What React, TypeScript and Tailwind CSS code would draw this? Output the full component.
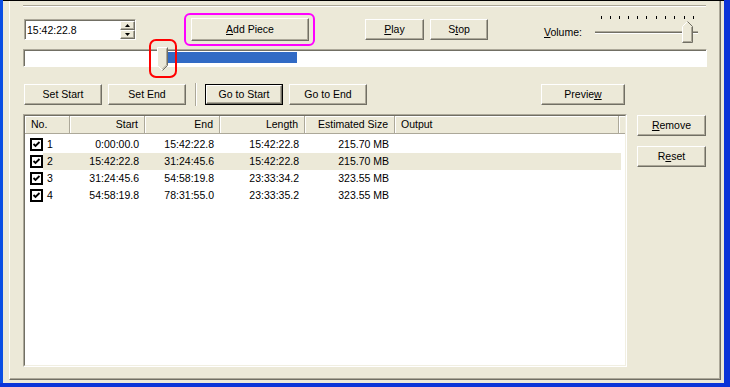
import type { ReactNode } from "react";
import clsx from "clsx";

const pieces = [
  { no: 1, start: "0:00:00.0", end: "15:42:22.8", length: "15:42:22.8", size: "215.70 MB" },
  { no: 2, start: "15:42:22.8", end: "31:24:45.6", length: "15:42:22.8", size: "215.70 MB" },
  { no: 3, start: "31:24:45.6", end: "54:58:19.8", length: "23:33:34.2", size: "323.55 MB" },
  { no: 4, start: "54:58:19.8", end: "78:31:55.0", length: "23:33:35.2", size: "323.55 MB" },
];

const ticks = [6, 15, 24, 33, 42, 51, 61, 70, 79, 89, 98];

function U({ children }: { children: ReactNode }) {
  return <span className="underline">{children}</span>;
}

function Btn({ children, className }: { children?: ReactNode; className?: string }) {
  return (
    <div
      className={clsx(
        "flex shrink-0 items-center justify-center border border-t-white border-l-white border-r-[#716f64] border-b-[#716f64] bg-[#ece9d8] shadow-[inset_-1px_-1px_0_#aca899]",
        className
      )}
    >
      {children}
    </div>
  );
}

function Check() {
  return (
    <div className="flex h-[13px] w-[13px] items-center justify-center border-2 border-black bg-white">
      <svg width="9" height="9" viewBox="0 0 9 9">
        <polyline points="1.5,4 3.5,6 7.5,2" fill="none" stroke="black" strokeWidth="1.8" />
      </svg>
    </div>
  );
}

function Arrow({ up }: { up?: boolean }) {
  return (
    <svg width="5" height="3" viewBox="0 0 5 3">
      <polygon points={up ? "2.5,0 5,3 0,3" : "0,0 5,0 2.5,3"} fill="black" />
    </svg>
  );
}

export default function App() {
  return (
    <div className="flex h-[387px] w-[730px] flex-col overflow-hidden bg-[#ece9d8] font-['Liberation_Sans',Arial,sans-serif] text-[10.5px] leading-none text-black">
      <div className="flex min-h-0 flex-1">
        <div className="w-[3px] bg-[#0a4ee4]" />

        <div className="flex min-w-0 flex-1 flex-col border-t border-t-black pr-[3px] pb-[3px] pl-[6px]">
          <div className="flex flex-1 flex-col border-l border-r border-b border-l-white border-r-[#716f64] border-b-[#716f64] shadow-[inset_-1px_-1px_0_#aca899]">
            {/* etched edge of the box above */}
            <div className="mt-[4px] ml-[13px] h-[2px] w-[683px] border-t border-b border-t-[#aca899] border-b-white" />

            {/* time / add piece / play / volume */}
            <div className="mt-[7px] flex h-[30px] items-start">
              <div className="mt-[5px] ml-[14px] h-[21px] w-[112px] border border-t-[#aca899] border-l-[#aca899] border-r-white border-b-white">
                <div className="relative flex h-full items-center border-t border-l border-t-[#716f64] border-l-[#716f64] bg-white pl-[1px]">
                  15:42:22.8
                  <div className="absolute top-0 right-0 flex h-full w-[15px] flex-col">
                    <Btn className="flex-1">
                      <Arrow up />
                    </Btn>
                    <Btn className="flex-1">
                      <Arrow />
                    </Btn>
                  </div>
                </div>
              </div>

              <div className="relative mt-[4px] ml-[55px]">
                <Btn className="h-[23px] w-[118px]">
                  <U>A</U>dd Piece
                </Btn>
                <div className="absolute -top-[5px] -right-[6px] -bottom-[5px] -left-[7px] rounded-[6px] border-2 border-[#ff00ff]" />
              </div>

              <Btn className="mt-[5px] ml-[56px] h-[21px] w-[59px]">
                <U>P</U>lay
              </Btn>
              <Btn className="mt-[5px] ml-[6px] h-[21px] w-[58px]">
                S<U>t</U>op
              </Btn>

              <div className="mt-[13px] ml-[56px] w-[51px]">
                <U>V</U>olume:
              </div>

              <svg width="104" height="30" viewBox="0 0 104 30" className="shrink-0">
                {ticks.map((t) => (
                  <rect key={t} x={t} y={2} width={1} height={3} fill="black" />
                ))}
                <rect x="0" y="17" width="103" height="1" fill="#aca899" />
                <rect x="0" y="18" width="103" height="1" fill="#716f64" />
                <rect x="0" y="19" width="103" height="1" fill="white" />
                <g transform="translate(87 7)">
                  <polygon points="0.5,5.5 5.5,0.5 10.5,5.5 10.5,21.5 0.5,21.5" fill="#ece9d8" />
                  <polyline points="0.5,21 0.5,5.5 5.5,0.5" fill="none" stroke="white" />
                  <polyline points="5.5,0.5 10.5,5.5 10.5,21.5 0.5,21.5" fill="none" stroke="#716f64" />
                  <polyline points="9.5,6 9.5,20.5 1,20.5" fill="none" stroke="#aca899" />
                </g>
              </svg>
            </div>

            {/* seek bar */}
            <div className="relative mt-[5px] ml-[13px] h-[18px] w-[684px] border border-t-[#aca899] border-l-[#aca899] border-r-white border-b-white">
              <div className="h-full border-t border-l border-t-[#716f64] border-l-[#716f64] bg-white" />
              <div className="absolute top-[2px] left-[143px] h-[11px] w-[130px] bg-[#316ac5]" />
              <svg width="11" height="24" viewBox="0 0 11 24" className="absolute -top-[3px] left-[133px]">
                <polygon points="0.5,0.5 10.5,0.5 10.5,18.5 5.5,23.5 0.5,18.5" fill="#ece9d8" />
                <polyline points="5.5,23.5 0.5,18.5 0.5,0.5 10.5,0.5" fill="none" stroke="white" />
                <polyline points="10.5,0.5 10.5,18.5 5.5,23.5" fill="none" stroke="#716f64" />
                <polyline points="9.5,1.5 9.5,18 5.5,22" fill="none" stroke="#aca899" />
              </svg>
              <div className="absolute -top-[11px] left-[125px] h-[39px] w-[28px] rounded-[7px] border-2 border-[#ff0000]" />
            </div>

            {/* navigation buttons */}
            <div className="mt-[17px] flex h-[21px] items-start">
              <Btn className="ml-[14px] h-[21px] w-[78px]">Set Start</Btn>
              <Btn className="ml-[6px] h-[21px] w-[78px]">Set End</Btn>
              <div className="-mt-[1px] ml-[9px] h-[23px] w-[2px] border-r border-l border-r-white border-l-[#aca899]" />
              <div className="ml-[8px] h-[21px] w-[78px] border border-black">
                <Btn className="h-full w-full">Go to Start</Btn>
              </div>
              <Btn className="ml-[6px] h-[21px] w-[78px]">Go to End</Btn>
              <Btn className="ml-[174px] h-[21px] w-[84px]">
                Previe<U>w</U>
              </Btn>
            </div>

            {/* piece list */}
            <div className="mt-[9px] flex items-start">
              <div className="ml-[13px] h-[253px] w-[604px] border border-t-[#aca899] border-l-[#aca899] border-r-white border-b-white">
                <div className="h-full border border-t-[#716f64] border-l-[#716f64] border-r-[#f1efe2] border-b-[#f1efe2] bg-white">
                  <div className="flex h-[18px] border-b border-b-[#aca899] bg-[#ece9d8]">
                    <div className="flex w-[45px] items-center border-r border-r-[#aca899] pl-[6px] shadow-[inset_1px_1px_0_white]">No.</div>
                    <div className="flex w-[75px] items-center justify-end border-r border-r-[#aca899] pr-[6px] shadow-[inset_1px_1px_0_white]">Start</div>
                    <div className="flex w-[75px] items-center justify-end border-r border-r-[#aca899] pr-[6px] shadow-[inset_1px_1px_0_white]">End</div>
                    <div className="flex w-[85px] items-center justify-end border-r border-r-[#aca899] pr-[6px] shadow-[inset_1px_1px_0_white]">Length</div>
                    <div className="flex w-[90px] items-center justify-end border-r border-r-[#aca899] pr-[6px] shadow-[inset_1px_1px_0_white]">Estimated Size</div>
                    <div className="flex w-[224px] items-center border-r border-r-[#aca899] pl-[6px] shadow-[inset_1px_1px_0_white]">Output</div>
                    <div className="flex-1 shadow-[inset_1px_1px_0_white]" />
                  </div>

                  <div className="mt-[2px]">
                    {pieces.map((p) => (
                      <div key={p.no} className="flex h-[17px]">
                        <div className="flex w-[18px] items-center pl-[5px]">
                          <Check />
                        </div>
                        <div className={clsx("flex w-[578px] items-center", p.no === 2 && "bg-[#ece9d8]")}>
                          <div className="w-[27px] pl-[4px]">{p.no}</div>
                          <div className="w-[75px] pr-[6px] text-right">{p.start}</div>
                          <div className="w-[75px] pr-[6px] text-right">{p.end}</div>
                          <div className="w-[85px] pr-[6px] text-right">{p.length}</div>
                          <div className="w-[90px] pr-[6px] text-right">{p.size}</div>
                        </div>
                      </div>
                    ))}
                  </div>
                </div>
              </div>

              <div className="mt-[1px] ml-[10px] flex flex-col">
                <Btn className="h-[21px] w-[69px]">
                  <U>R</U>emove
                </Btn>
                <Btn className="mt-[10px] h-[21px] w-[69px]">
                  R<U>e</U>set
                </Btn>
              </div>
            </div>
          </div>
        </div>

        <div className="w-[6px] bg-[#0b34d8]" />
      </div>
      <div className="h-[4px] bg-[#0b34d8]" />
    </div>
  );
}
